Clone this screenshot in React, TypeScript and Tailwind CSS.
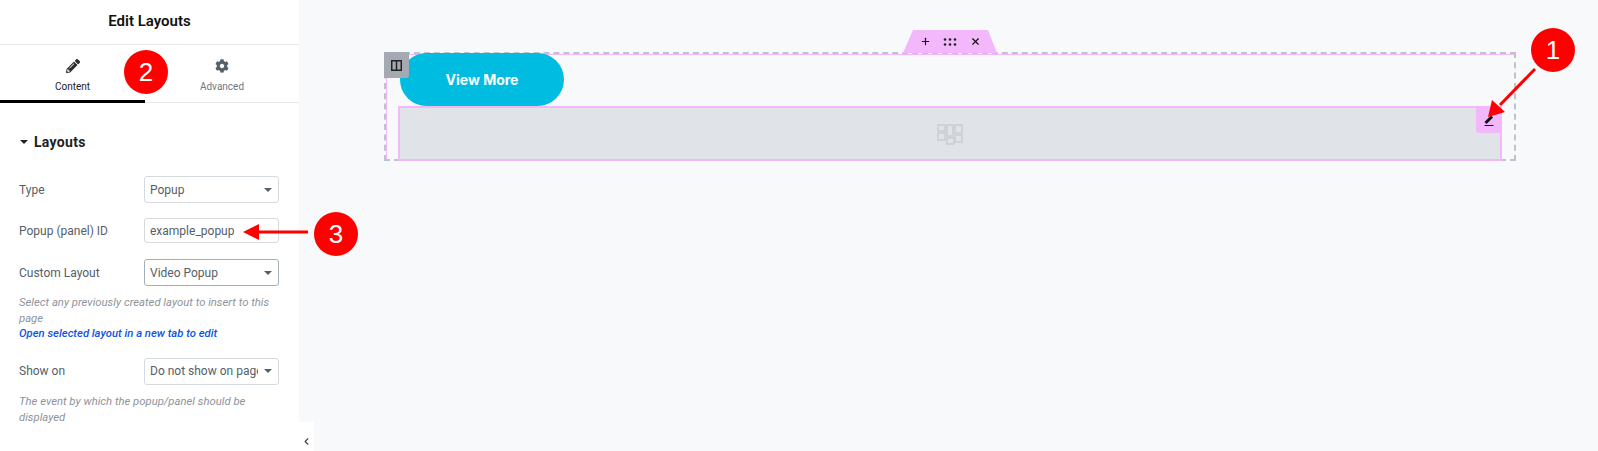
import React from 'react';
import { ChevronLeft, Plus, X } from 'lucide-react';
import { FaCog, FaPencilAlt } from 'react-icons/fa';

const Caret = () => <span className="border-x-[4px] border-t-[4px] border-x-transparent border-t-[#556068] shrink-0" />;

const Field: React.FC<{ label: string; value: string; select?: boolean; dark?: boolean; clip?: boolean; className?: string }> = ({ label, value, select, dark, clip, className }) => (
  <div className={`flex items-center justify-between text-[12px] text-[#556068] ${className ?? ''}`}>
    <span>{label}</span>
    <div className={`w-[135px] flex items-center pl-[5px] pr-[5px] bg-white rounded-[3px] border ${select ? 'h-[27px]' : 'h-[25px]'} ${dark ? 'border-[#a4afb7]' : 'border-[#d5dadf]'}`}>
      <span className={`whitespace-nowrap overflow-hidden ${clip ? 'w-[108px]' : 'flex-1'}`}>{value}</span>
      {select && <span className="ml-auto flex pr-[1px]"><Caret /></span>}
    </div>
  </div>
);

const Badge: React.FC<{ n: number; className: string }> = ({ n, className }) => (
  <div className={`absolute w-11 h-11 rounded-full bg-[#fe0000] text-white text-[26px] flex items-center justify-center font-['Liberation_Sans',sans-serif] ${className}`}>{n}</div>
);

function Panel() {
  return (
    <aside className="w-[299px] h-[451px] bg-white shrink-0 flex flex-col shadow-[1px_0_3px_rgba(0,0,0,0.05)]">
      <div className="h-[45px] border-b border-[#e6e9ec] flex items-center justify-center text-[15px] font-semibold text-[#111] pb-[2px]">Edit Layouts</div>
      <div className="h-[58px] border-b border-[#e6e9ec] flex">
        <div className="w-[145px] h-[58px] border-b-[3px] border-black flex flex-col items-center pt-[14px] text-[#222]">
          <FaPencilAlt size={14} color="#2b2b2b" />
          <span className="text-[10px] leading-[14px] mt-[7px]">Content</span>
        </div>
        <div className="flex-1 flex flex-col items-center pt-[14px] text-[#6d7882]">
          <FaCog size={14} color="#556068" />
          <span className="text-[10px] leading-[14px] mt-[7px]">Advanced</span>
        </div>
      </div>
      <div className="pl-[19px] pr-[20px] flex flex-col">
        <div className="flex items-center gap-[6px] mt-[29px] pl-[1px] text-[14px] leading-[20px] font-bold text-[#222] tracking-[0.3px]">
          <span className="border-x-[4px] border-t-[4px] border-x-transparent border-t-[#222]" />
          Layouts
        </div>
        <Field className="mt-[24px]" label="Type" value="Popup" select />
        <Field className="mt-[15px]" label="Popup (panel) ID" value="example_popup" />
        <Field className="mt-[16px]" label="Custom Layout" value="Video Popup" select dark />
        <p className="mt-[9px] -mr-[10px] text-[11.3px] leading-[15.5px] italic text-[#8d949c]">
          Select any previously created layout to insert to this page
          <br />
          <span className="text-[#0f55e0] font-medium">Open selected layout in a new tab to edit</span>
        </p>
        <Field className="mt-[16px]" label="Show on" value="Do not show on page" select clip />
        <p className="mt-[9px] text-[11.3px] leading-[16px] italic text-[#8d949c]">The event by which the popup/panel should be displayed</p>
      </div>
    </aside>
  );
}

function Canvas() {
  return (
    <main className="relative flex-1 h-[451px] bg-[#f8f9fb] pl-[85px] pt-[52px]">
      <div className="relative w-[1132px] h-[109px] border-2 border-dashed border-[#c0c3cb] shadow-[inset_1px_1px_0_#f3b7fb] pl-[12px] flex flex-col">
        <div className="absolute -top-[2px] -left-[2px] w-[25px] h-[26px] bg-[#a4a9b2] rounded-br-[3px] flex items-center justify-center">
          <svg width="11" height="11" viewBox="0 0 11 11" fill="none" stroke="#222" strokeWidth="1.500">
            <rect x="0.750" y="0.750" width="9.500" height="9.500" />
            <path d="M5.500 1v9" />
          </svg>
        </div>
        <div className="absolute -top-[24px] left-[517px] w-[94px] h-[23px] bg-[#f3b7fb] [clip-path:polygon(10px_0,85px_0,94px_100%,0_100%)] flex items-center justify-center gap-[12.5px] text-[#111]">
          <Plus size={11} strokeWidth={2.5} />
          <svg width="14" height="8" viewBox="0 0 14 8" fill="#222">
            <circle cx="2" cy="1.500" r="1.300" /><circle cx="7" cy="1.500" r="1.300" /><circle cx="12" cy="1.500" r="1.300" />
            <circle cx="2" cy="6.500" r="1.300" /><circle cx="7" cy="6.500" r="1.300" /><circle cx="12" cy="6.500" r="1.300" />
          </svg>
          <X size={11} strokeWidth={2.5} />
        </div>
        <div className="-mt-[1px] ml-[2px] w-[164px] h-[53px] rounded-full bg-[#00bce0] text-white text-[14px] font-bold font-['Inter',sans-serif] flex items-center justify-center shrink-0">View More</div>
        <div className="relative w-[1104px] h-[55px] shrink-0 bg-[#e0e3e7] border-2 border-[#f3b7fb] flex items-center justify-center">
          <svg className="mt-[2px]" width="26" height="21" viewBox="0 0 26 21" fill="none" stroke="#c9ced3" strokeWidth="1.500">
            <rect x="1" y="1" width="7" height="6" /><rect x="1" y="9" width="7" height="7" />
            <rect x="10" y="1" width="6" height="11" /><rect x="18" y="1" width="7" height="8" />
            <rect x="18" y="11" width="7" height="7" /><rect x="10" y="14" width="7" height="6" />
          </svg>
          <div className="absolute -top-[2px] -right-[2px] w-[26px] h-[27px] bg-[#f3b7fb] rounded-bl-[3px] flex items-center justify-center">
            <svg width="13" height="13" viewBox="0 0 13 13" fill="none" stroke="#111">
              <path d="M2.500 10L9 3.500" strokeWidth="3" />
              <path d="M1.500 12.500h9" strokeWidth="1" />
            </svg>
          </div>
        </div>
      </div>
      <button className="absolute left-0 top-[422px] w-[15px] h-[29px] bg-white flex items-center justify-center text-[#444]">
        <ChevronLeft size={11} strokeWidth={2.5} className="mt-[10px]" />
      </button>
    </main>
  );
}

export default function App() {
  return (
    <div className="relative w-[1598px] h-[451px] flex overflow-hidden font-['Roboto',sans-serif]">
      <Panel />
      <Canvas />
      <Badge n={1} className="left-[1531px] top-[28px]" />
      <Badge n={2} className="left-[124px] top-[50px]" />
      <Badge n={3} className="left-[314px] top-[212px]" />
      <svg className="absolute left-0 top-0 pointer-events-none" width="1598" height="451" fill="#fe0000" stroke="none">
        <path d="M1535 69L1500 105" stroke="#fe0000" strokeWidth="3" />
        <path d="M1488 117L1492 100 1505 112z" />
        <path d="M308 232H256" stroke="#fe0000" strokeWidth="3" />
        <path d="M243 232L259 224V240z" />
      </svg>
    </div>
  );
}
